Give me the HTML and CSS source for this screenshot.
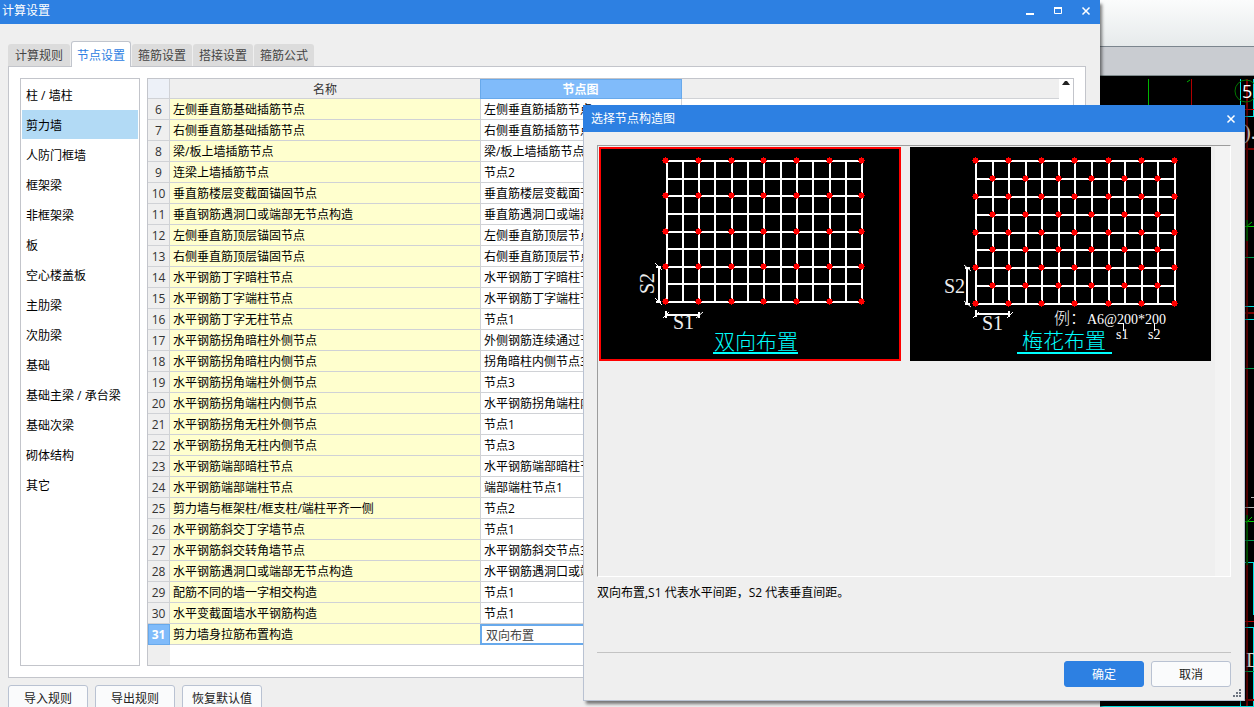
FILE: index.html
```html
<!DOCTYPE html>
<html lang="zh-CN">
<head>
<meta charset="utf-8">
<meta name="viewport" content="width=device-width, initial-scale=1">
<title>计算设置</title>
<link rel="stylesheet" href="styles.css">
</head>
<body>
<div class="desktop">
  <div class="ribbon"></div>
  <div class="ribbon-gap"></div>
  <svg class="drawing" width="154" height="707" viewBox="1100 0 154 707" fill="none" aria-hidden="true">
    <path d="M1247 79V707" stroke="#7a0000" stroke-width="2"/>
    <path d="M1191.500 79v30" stroke="#b00000"/>
    <path d="M1148.500 79v30" stroke="#00b400"/>
    <path d="M1187 82l3-2" stroke="#00b400"/>
    <path d="M1240.500 79v30M1253.500 79v37M1245 116.500h9M1245 306.500h9M1245 319.500h9M1245 562.500h9M1253.500 562v53M1245 627.500h9M1240.500 700v7M1100 706.500h153M1253.500 627v80" stroke="#00e5e5"/>
    <circle cx="1246" cy="91" r="11" stroke="#007800"/>
    <path d="M1245 109.500h9M1245 621.500h9" stroke="#c00000"/>
    <path d="M1245 149h9M1245 313h9M1245 700h9" stroke="#7a0000" stroke-width="2"/>
    <path d="M1247 220v21M1247 515v50" stroke="#006e00" stroke-width="2"/>
    <path d="M1245 226.500h9M1246 227l6-5M1245 521.500h9M1246 523l6-6" stroke="#00d000"/>
    <path d="M1245 257.500h9M1245 368.500h9M1245 540.500h9M1245 671.500h9" stroke="#00a050"/>
    <path d="M1245 507.500h9M1251 497.500h3" stroke="#bbb"/>
    <text x="1242" y="98" class="cad-number">5</text>
    <text x="1244" y="139" class="cad-mark">).</text>
    <text x="1246" y="667" class="cad-mark">D</text>
  </svg>

  <main class="window">
    <header class="titlebar">
      <h1 class="title">计算设置</h1>
      <div class="window-controls">
        <button class="control" type="button" aria-label="最小化"><svg width="10" height="10"><path d="M1 8H9" stroke="#fff" stroke-width="2"/></svg></button>
        <button class="control" type="button" aria-label="最大化"><svg width="10" height="10" fill="none" stroke="#fff"><path d="M1.500 2V7.500H8.500V2"/><path d="M1 2H9" stroke-width="2"/></svg></button>
        <button class="control" type="button" aria-label="关闭"><svg width="10" height="10"><path d="M1.500 1.500L8.500 8.500M8.500 1.500L1.500 8.500" stroke="#fff" stroke-width="1.500"/></svg></button>
      </div>
    </header>

    <div class="window-body">
      <div class="tabs" role="tablist">
        <button class="tab" type="button" role="tab">计算规则</button>
        <button class="tab tab-active" type="button" role="tab" aria-selected="true">节点设置</button>
        <button class="tab" type="button" role="tab">箍筋设置</button>
        <button class="tab" type="button" role="tab">搭接设置</button>
        <button class="tab" type="button" role="tab">箍筋公式</button>
      </div>

      <section class="panel">
        <nav class="categories">
          <button class="category" type="button">柱 / 墙柱</button>
          <button class="category category-active" type="button">剪力墙</button>
          <button class="category" type="button">人防门框墙</button>
          <button class="category" type="button">框架梁</button>
          <button class="category" type="button">非框架梁</button>
          <button class="category" type="button">板</button>
          <button class="category" type="button">空心楼盖板</button>
          <button class="category" type="button">主肋梁</button>
          <button class="category" type="button">次肋梁</button>
          <button class="category" type="button">基础</button>
          <button class="category" type="button">基础主梁 / 承台梁</button>
          <button class="category" type="button">基础次梁</button>
          <button class="category" type="button">砌体结构</button>
          <button class="category" type="button">其它</button>
        </nav>

        <div class="grid">
          <table class="nodes">
            <colgroup><col class="col-index"><col class="col-name"><col class="col-node"><col></colgroup>
            <thead>
              <tr><th class="corner"></th><th class="head-name">名称</th><th class="head-active">节点图</th><th class="head-rest"></th></tr>
            </thead>
            <tbody>
              <tr><th>6</th><td>左侧垂直筋基础插筋节点</td><td>左侧垂直筋插筋节点</td><td></td></tr>
              <tr><th>7</th><td>右侧垂直筋基础插筋节点</td><td>右侧垂直筋插筋节点</td><td></td></tr>
              <tr><th>8</th><td>梁/板上墙插筋节点</td><td>梁/板上墙插筋节点</td><td></td></tr>
              <tr><th>9</th><td>连梁上墙插筋节点</td><td>节点2</td><td></td></tr>
              <tr><th>10</th><td>垂直筋楼层变截面锚固节点</td><td>垂直筋楼层变截面节点</td><td></td></tr>
              <tr><th>11</th><td>垂直钢筋遇洞口或端部无节点构造</td><td>垂直筋遇洞口或端部构造</td><td></td></tr>
              <tr><th>12</th><td>左侧垂直筋顶层锚固节点</td><td>左侧垂直筋顶层节点</td><td></td></tr>
              <tr><th>13</th><td>右侧垂直筋顶层锚固节点</td><td>右侧垂直筋顶层节点</td><td></td></tr>
              <tr><th>14</th><td>水平钢筋丁字暗柱节点</td><td>水平钢筋丁字暗柱节点</td><td></td></tr>
              <tr><th>15</th><td>水平钢筋丁字端柱节点</td><td>水平钢筋丁字端柱节点</td><td></td></tr>
              <tr><th>16</th><td>水平钢筋丁字无柱节点</td><td>节点1</td><td></td></tr>
              <tr><th>17</th><td>水平钢筋拐角暗柱外侧节点</td><td>外侧钢筋连续通过节点</td><td></td></tr>
              <tr><th>18</th><td>水平钢筋拐角暗柱内侧节点</td><td>拐角暗柱内侧节点3</td><td></td></tr>
              <tr><th>19</th><td>水平钢筋拐角端柱外侧节点</td><td>节点3</td><td></td></tr>
              <tr><th>20</th><td>水平钢筋拐角端柱内侧节点</td><td>水平钢筋拐角端柱内侧节点</td><td></td></tr>
              <tr><th>21</th><td>水平钢筋拐角无柱外侧节点</td><td>节点1</td><td></td></tr>
              <tr><th>22</th><td>水平钢筋拐角无柱内侧节点</td><td>节点3</td><td></td></tr>
              <tr><th>23</th><td>水平钢筋端部暗柱节点</td><td>水平钢筋端部暗柱节点</td><td></td></tr>
              <tr><th>24</th><td>水平钢筋端部端柱节点</td><td>端部端柱节点1</td><td></td></tr>
              <tr><th>25</th><td>剪力墙与框架柱/框支柱/端柱平齐一侧</td><td>节点2</td><td></td></tr>
              <tr><th>26</th><td>水平钢筋斜交丁字墙节点</td><td>节点1</td><td></td></tr>
              <tr><th>27</th><td>水平钢筋斜交转角墙节点</td><td>水平钢筋斜交节点3</td><td></td></tr>
              <tr><th>28</th><td>水平钢筋遇洞口或端部无节点构造</td><td>水平钢筋遇洞口或端部构造</td><td></td></tr>
              <tr><th>29</th><td>配筋不同的墙一字相交构造</td><td>节点1</td><td></td></tr>
              <tr><th>30</th><td>水平变截面墙水平钢筋构造</td><td>节点1</td><td></td></tr>
              <tr><th class="index-active">31</th><td>剪力墙身拉筋布置构造</td><td class="cell-edit"><input class="editor" type="text" value="双向布置" aria-label="节点图"></td><td></td></tr>
              <tr class="filler"><th></th><td></td><td></td><td></td></tr>
            </tbody>
          </table>
          <button class="scroll-up" type="button" aria-label="向上滚动"><svg width="8" height="4"><path d="M0 4L3 0H5L8 4Z" fill="#222"/></svg></button>
        </div>
      </section>

      <footer class="actions">
        <button class="button" type="button">导入规则</button>
        <button class="button" type="button">导出规则</button>
        <button class="button" type="button">恢复默认值</button>
      </footer>
    </div>
  </main>

  <section class="dialog" role="dialog" aria-labelledby="dialog-title">
    <header class="dialog-titlebar">
      <h2 class="title" id="dialog-title">选择节点构造图</h2>
      <button class="control" type="button" aria-label="关闭"><svg width="10" height="10"><path d="M1.500 1.500L8.500 8.500M8.500 1.500L1.500 8.500" stroke="#fff" stroke-width="1.500"/></svg></button>
    </header>
    <div class="dialog-body">
      <div class="gallery">
        <button class="option option-active" type="button" aria-label="双向布置">
          <svg width="302" height="214" viewBox="0 0 302 214">
            <defs>
              <marker id="bar" markerUnits="userSpaceOnUse" markerWidth="8" markerHeight="8" refX="4" refY="4"><path d="M3 0H4V1H6V3H7V4H6V6H4V7H3V6H1V4H0V3H1V1H3Z" fill="red"/></marker>
              <path id="even-row" class="bars" d="M67 14H100H133H165H198H231H263"/>
            </defs>
            <path class="mesh" d="M68 13V156M84 13V156M100 13V156M116 13V156M133 13V156M149 13V156M165 13V156M182 13V156M198 13V156M214 13V156M231 13V156M247 13V156M263 13V156M67 14H264M67 32H264M67 49H264M67 67H264M67 85H264M67 102H264M67 120H264M67 137H264M67 155H264"/>
            <use href="#even-row"/><use href="#even-row" y="35"/><use href="#even-row" y="71"/><use href="#even-row" y="106"/><use href="#even-row" y="141"/>
            <path class="mesh" d="M60 120V155M57 120H62M57 155H62M67 168H100M67 164V171M100 165V171"/>
            <path class="tick" d="M56 116L63 123M56 151L63 158M64 171L70 165M97 171L104 165"/>
            <text class="dim" x="74" y="182">S1</text>
            <text class="dim" transform="translate(55 147) rotate(-90)">S2</text>
            <text class="caption" x="115" y="202">双向布置</text>
            <path class="underline" d="M114 206H199"/>
          </svg>
        </button>
        <button class="option" type="button" aria-label="梅花布置">
          <svg width="301" height="214" viewBox="0 0 301 214">
            <defs>
              <path id="outer-row" class="bars" d="M66 14H99H132H165H199H232H265"/>
              <path id="inner-row" class="bars" d="M83 32H116H149H182H215H248"/>
            </defs>
            <path class="mesh" d="M66 13V158M83 13V158M99 13V158M116 13V158M132 13V158M149 13V158M165 13V158M182 13V158M199 13V158M215 13V158M232 13V158M248 13V158M265 13V158M65 14H266M65 32H266M65 50H266M65 68H266M65 86H266M65 103H266M65 121H266M65 139H266M65 157H266"/>
            <use href="#outer-row"/><use href="#outer-row" y="36"/><use href="#outer-row" y="72"/><use href="#outer-row" y="107"/><use href="#outer-row" y="143"/>
            <use href="#inner-row"/><use href="#inner-row" y="36"/><use href="#inner-row" y="71"/><use href="#inner-row" y="107"/>
            <path class="mesh" d="M57 121V157M55 121H60M55 157H60M66 167H99M66 163V170M99 164V170"/>
            <path class="tick" d="M54 118L61 124M54 154L61 160M63 171L69 165M97 171L103 165M213.500 176V184M244.500 176V184"/>
            <text class="dim" x="34" y="146">S2</text>
            <text class="dim" x="72" y="183">S1</text>
            <text class="note-label" x="144" y="177">例：</text>
            <text class="note" x="177" y="177">A6@200*200</text>
            <text class="note" x="206" y="192">s1</text>
            <text class="note" x="238" y="192">s2</text>
            <text class="caption" x="112" y="201">梅花布置</text>
            <path class="underline" d="M107 206H202"/>
          </svg>
        </button>
      </div>
      <p class="description">双向布置,S1 代表水平间距，S2 代表垂直间距。</p>
      <footer class="dialog-actions">
        <button class="button button-primary" type="button">确定</button>
        <button class="button" type="button">取消</button>
      </footer>
    </div>
    <svg class="grip" width="8" height="8" fill="#6d7480" aria-hidden="true"><path d="M6 0h2v2H6zM3 3h2v2H3zM6 3h2v2H6zM0 6h2v2H0zM3 6h2v2H3zM6 6h2v2H6z"/></svg>
  </section>
</div>
</body>
</html>
```
FILE: styles.css
```css
* { box-sizing: border-box; }

body {
  margin: 0;
  font: 12px/20px "Open Sans", "Noto Sans CJK SC", sans-serif;
  color: #000;
}

button, input {
  font: inherit;
  color: inherit;
  border: 0;
  padding: 0;
  margin: 0;
  background: none;
}

svg { display: block; }

.desktop {
  position: relative;
  height: 100vh;
  overflow: hidden;
  background: #000;
}

.ribbon {
  height: 47px;
  background: linear-gradient(#fbfcfc, #e6eaeb);
  border-bottom: 1px solid #7b858e;
}

.ribbon-gap {
  height: 29px;
  background: #c9ccd1;
  border-bottom: 1px solid #7f8b8d;
}

.drawing {
  position: absolute;
  top: 0;
  right: 0;
}

.cad-number { font-size: 18px; fill: #fff; }
.cad-mark { font: 20px "Liberation Serif", serif; fill: #ddd; }

/* Settings window */
.window {
  position: absolute;
  inset: 0 154px -12px 0;
  display: flex;
  flex-direction: column;
  background: #efefef;
  box-shadow: 2px 4px 3px rgba(0, 0, 0, 0.5);
}

.titlebar, .dialog-titlebar {
  display: flex;
  align-items: center;
  justify-content: space-between;
  flex: none;
  color: #fff;
  background: #2d80e2;
}

.titlebar { height: 24px; padding: 0 9px 3px 2px; }
.dialog-titlebar { height: 27px; padding: 0 9px 0 8px; }

.title { margin: 0; font-size: 12px; font-weight: 400; }

.window-controls { display: flex; gap: 18px; }

.control { display: block; }

.window-body {
  display: flex;
  flex-direction: column;
  flex: 1;
  min-height: 0;
  padding: 17px 14px 8px 8px;
}

.tabs {
  display: flex;
  align-items: flex-end;
  gap: 1px;
  height: 26px;
  position: relative;
  z-index: 1;
  margin-bottom: -1px;
}

.tab {
  width: 60px;
  height: 22px;
  padding-top: 2px;
  margin-bottom: 1px;
  color: #444;
  background: #dcdcdc;
  border-radius: 3px 3px 0 0;
}

.tab:first-child { width: 62px; }

.tab-active {
  height: 26px;
  margin-bottom: 0;
  color: #2d80e2;
  background: #fff;
  border: 1px solid #c1c5cd;
  border-bottom: 0;
}

.panel {
  display: flex;
  gap: 7px;
  flex: 1;
  min-height: 0;
  padding: 11px;
  background: #fff;
  border: 1px solid #c3c5cb;
}

.categories {
  display: flex;
  flex-direction: column;
  flex: none;
  width: 120px;
  padding: 1px;
  border: 1px solid #c3c5cb;
}

.category {
  height: 30px;
  padding: 2px 0 0 4px;
  text-align: left;
  border-bottom: 1px solid #fff;
}

.category-active { background: #b2daf5; }

.grid {
  display: flex;
  align-items: flex-start;
  flex: 1;
  min-width: 0;
  border: 1px solid #c3c5cb;
}

.nodes {
  flex: 1;
  width: 0;
  height: 100%;
  table-layout: fixed;
  border-spacing: 0;
  line-height: 18px;
}

.col-index { width: 22px; }
.col-name { width: 310px; }
.col-node { width: 202px; }

.nodes th, .nodes td {
  height: 21px;
  padding: 2px 0 0 3px;
  overflow: hidden;
  text-align: left;
  white-space: nowrap;
  border-right: 1px solid #d0d2d6;
  border-bottom: 1px solid #d0d2d6;
}

.nodes th {
  padding: 2px 0 0;
  font-weight: 400;
  text-align: center;
  color: #333;
  background: #efefef;
}

.nodes thead th { height: 20px; line-height: 17px; }
.nodes td:nth-child(2) { background: #ffffce; border-right: 0; }
.nodes td:nth-child(3) { border-left: 1px solid #d0d2d6; }
.nodes td:last-child { border: 0; }
.nodes .corner { background: #edf1f8; }
.nodes .head-name, .nodes .head-rest { border-right: 0; }

.nodes .head-active, .nodes .index-active {
  font-weight: 700;
  color: #fff;
  background: #80bbfa;
  border-color: #68a9eb;
  box-shadow: inset 1px 1px #68a9eb;
}

.nodes td.cell-edit { padding: 0; border: 0; }

.editor {
  display: block;
  width: 100%;
  height: 21px;
  padding: 1px 0 0 4px;
  color: #444;
  border: 2px solid #68a9eb;
}

.nodes .filler th, .nodes .filler td { height: auto; border: 0; background: #fff; }
.nodes .filler th { background: #efefef; }

.scroll-up {
  display: flex;
  justify-content: center;
  align-items: flex-start;
  width: 14px;
  height: 20px;
  padding-top: 2px;
}

.actions { display: flex; gap: 7px; flex: none; padding-top: 7px; }

.button {
  width: 80px;
  height: 26px;
  padding-top: 1px;
  color: #222;
  background: #fafbfc;
  border: 1px solid #b9c2d2;
  border-radius: 3px;
}

.button-primary { color: #fff; background: #2d80e2; border-color: #2d80e2; }

/* Node picker */
.dialog {
  position: absolute;
  inset: 105px 9px 6px 583px;
  display: flex;
  flex-direction: column;
  background: #efefef;
  box-shadow: inset 1px 0 #b9c2d2, inset -1px -1px #b9c2d2, 3px 3px 3px rgba(0, 0, 0, 0.5);
}

.dialog-body {
  display: flex;
  flex-direction: column;
  flex: 1;
  padding: 13px 14px 14px;
}

.gallery {
  display: flex;
  align-items: flex-start;
  gap: 9px;
  flex: 1;
  padding: 1px;
  border: 1px solid;
  border-color: #9c9c9c #fff #fff #9c9c9c;
  background: linear-gradient(to left, #f3f3f3 15px, #efefef 15px);
}

.option { position: relative; background: #000; }

.option-active::after {
  content: "";
  position: absolute;
  inset: 0;
  border: 2px solid #f00;
}

.mesh { fill: none; stroke: #fff; stroke-width: 2; }
.tick { fill: none; stroke: #fff; }
.bars { fill: none; stroke: none; marker: url(#bar); }
.dim { font: 20px "Liberation Serif", serif; fill: #eee; }
.note { font: 14px "Liberation Serif", serif; fill: #fff; }
.note-label { font: 300 16px "Noto Sans CJK SC", sans-serif; fill: #fff; }
.caption { font: 300 21px "Noto Sans CJK SC", sans-serif; fill: #0ff; }
.underline { stroke: #0ff; stroke-width: 2; }

.description { height: 75px; margin: 0; padding-top: 6px; }

.dialog-actions {
  display: flex;
  justify-content: flex-end;
  gap: 7px;
  padding-top: 8px;
  border-top: 1px solid #c3c3c3;
}

.grip { position: absolute; right: 4px; bottom: 4px; }
```
